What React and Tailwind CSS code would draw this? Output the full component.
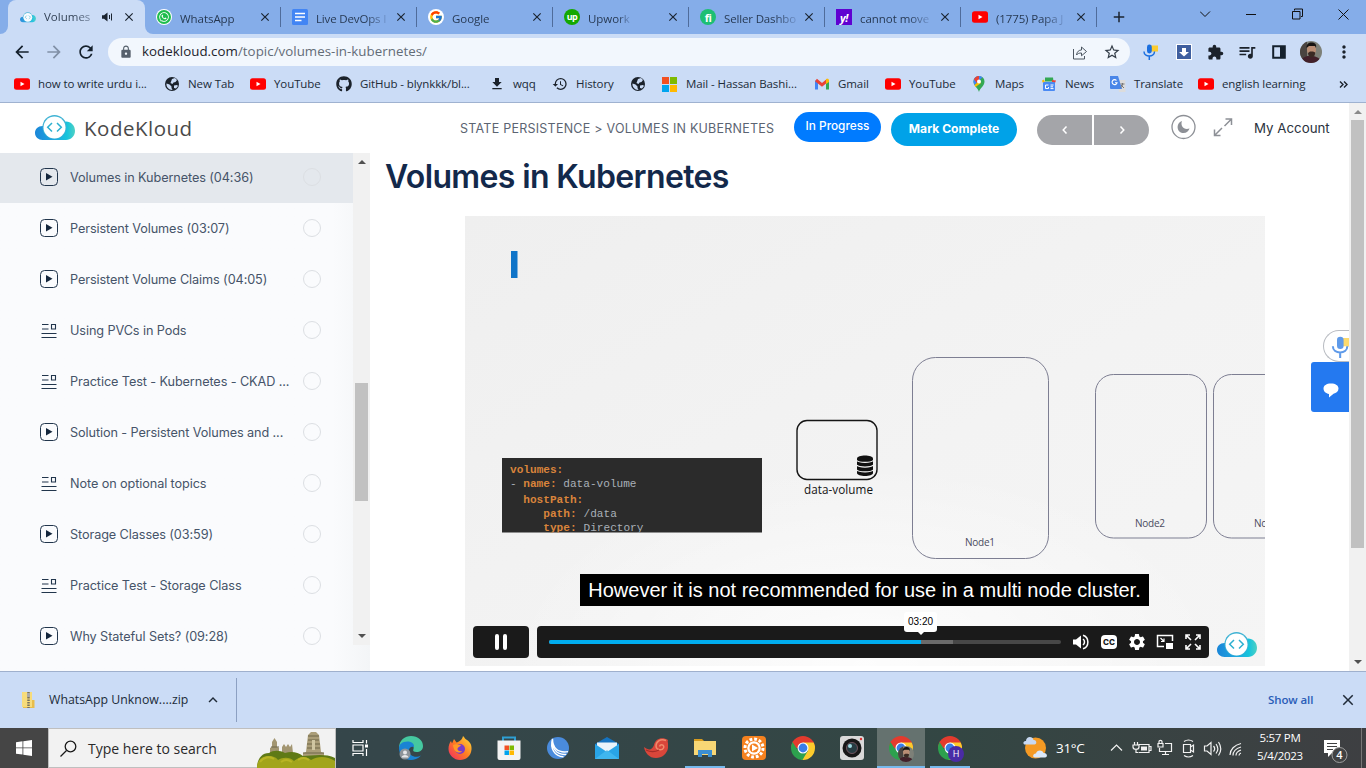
import React from "react";
import { FcGoogle } from "react-icons/fc";
import { FaGithub, FaWhatsapp } from "react-icons/fa";
import {
  MdClose, MdAdd, MdArrowBack, MdArrowForward, MdRefresh, MdLock, MdStarBorder, MdExtension,
  MdQueueMusic, MdMoreVert, MdHistory, MdFileDownload, MdSettings, MdKeyboardArrowUp,
} from "react-icons/md";

const UI = "font-['Open_Sans','Noto_Sans',sans-serif]";

function Cloud({ className }) {
  return (
    <svg viewBox="0 0 40 26" className={className}>
      <defs>
        <linearGradient id="cloudBase" x1="0" y1="0" x2="1" y2="0">
          <stop offset="0" stopColor="#1b86d8" />
          <stop offset="0.5" stopColor="#1fa9e0" />
          <stop offset="0.8" stopColor="#16c4dc" />
          <stop offset="1" stopColor="#4fd0c4" />
        </linearGradient>
      </defs>
      <path d="M7.500 25C3.500 25 0 22 0 18s3-7 7.500-7L31 6.500c5 0 9 4 9 9.300S36 25 31 25Z" fill="url(#cloudBase)" />
      <circle cx="19.500" cy="12" r="12" fill="#3fb3d4" />
      <circle cx="19.500" cy="12.500" r="11" fill="#fff" />
      <path d="m17 8-4.300 4.300L17 16.500M22 8l4.300 4.300L22 16.500" fill="none" stroke="#2cb0d0" strokeWidth="1.500" />
    </svg>
  );
}

function YT() {
  return (
    <svg viewBox="0 0 16 16" className="size-4 shrink-0">
      <rect y="2.300" width="16" height="11.500" rx="2.500" fill="#f00" />
      <path d="m6.500 5.700 4 2.300-4 2.300Z" fill="#fff" />
    </svg>
  );
}

function Docs() {
  return (
    <svg viewBox="0 0 16 16" className="size-4 shrink-0">
      <rect width="16" height="16" rx="1.500" fill="#4285f4" />
      <path d="M3 4.500h10M3 8h10M3 11.500h6.500" stroke="#fff" strokeWidth="1.500" />
    </svg>
  );
}

function Badge({ className, children }) {
  return <span className={"flex size-4 shrink-0 items-center justify-center font-bold text-white leading-none " + className}>{children}</span>;
}

function WhatsIcon() {
  return (
    <span className="flex size-4 shrink-0 items-center justify-center rounded-full bg-white">
      <FaWhatsapp className="size-[14px] rounded-full bg-[#1fbd4d] p-[1.500px] text-white" />
    </span>
  );
}

const tabs = [
  ["WhatsApp", <WhatsIcon />, "tracking-[-0.050px]"],
  ["Live DevOps I", <Docs />, "tracking-[-0.150px]"],
  ["Google", <span className="flex size-4 items-center justify-center rounded-full bg-white"><FcGoogle className="size-[14px]" /></span>, "tracking-[-0.050px]"],
  ["Upwork", <Badge className="rounded-full bg-[#14a800] text-[9px] tracking-tighter pb-px">up</Badge>, "tracking-[-0.050px]"],
  ["Seller Dashbo", <Badge className="rounded-full bg-[#1dbf73] text-[11px] tracking-tighter">fi</Badge>, "tracking-[-0.150px]"],
  ["cannot move", <Badge className="bg-[#5f01d1] text-[11px] tracking-tighter italic">y!</Badge>, "tracking-[-0.050px]"],
  ["(1775) Papa J", <YT />, "tracking-[-0.120px]"],
];

function TabStrip() {
  return (
    <div className="flex h-[34px] bg-[#85ade9]">
      <div className="w-2 shrink-0 bg-[#cbdcf6]"><div className="h-full rounded-br-lg bg-[#85ade9]" /></div>
      <div className="flex w-[137px] shrink-0 items-center rounded-t-lg bg-[#cbdcf6] pl-3">
        <Cloud className="h-[11px] w-4 opacity-90" />
        <span className="ml-2 w-[49px] whitespace-nowrap bg-gradient-to-r from-[#2d3c50] from-60% to-[#8798b2] bg-clip-text text-[11.500px] text-transparent">Volumes</span>
        <svg viewBox="0 0 11 10" className="ml-[9px] h-[10px] w-[11px]" fill="none" stroke="#1b2430"><path d="M0 3.300h2L5.500.5v9L2 6.700H0Z" fill="#1b2430" stroke="none" /><path d="M7.500 3v4M9.500 1.500v7" /></svg>
        <MdClose className="ml-[9px] size-[14px] text-[#1b2430]" />
      </div>
      <div className="w-2 shrink-0 bg-[#cbdcf6]"><div className="h-full rounded-bl-lg bg-[#85ade9]" /></div>
      {tabs.map(([label, icon, tr], i) => (
        <div key={label} className={(i === 0 ? "w-[128px] pl-[3px]" : "w-[136px] pl-[11px]") + " relative flex shrink-0 items-center"}>
          {icon}
          <span className="ml-2 w-[78px] shrink-0"><span className={"whitespace-nowrap bg-gradient-to-r from-[#24364f] bg-clip-text text-[11.500px] text-transparent " + (i % 2 || i > 3 ? "from-70% to-[#6f93cc] " : "to-[#24364f] ") + tr}>{label}</span></span>
          <MdClose className="size-[14px] shrink-0 text-[#1b2430]" />
          <span className="absolute top-[7px] right-0 h-5 w-px bg-[#4f6c9b]" />
        </div>
      ))}
      <MdAdd className="mt-[8px] ml-[13px] size-[18px] text-[#1b2430]" />
      <svg viewBox="0 0 160 34" className="ml-[72px] h-[34px] w-[160px] shrink-0" fill="none" stroke="#111" strokeWidth="1">
        <path d="m0 11.500 5 5 5-5M46 14.500h10M94.500 10.500v-1.500h8v7.500h-1.500M92.500 11.500h7.500v7.500h-7.500ZM138.500 9.500l10 10m0-10-10 10" />
      </svg>
    </div>
  );
}

function Avatar({ className }) {
  return (
    <svg viewBox="0 0 22 22" className={className}>
      <clipPath id="av"><circle cx="11" cy="11" r="11" /></clipPath>
      <g clipPath="url(#av)">
        <rect width="22" height="22" fill="#7d8078" />
        <rect width="7" height="22" fill="#4a4440" />
        <path d="M0 22c1-5 5-7 9-7s11 0 13 7Z" fill="#42202a" />
        <path d="M7 8c0-3 2-4 4.500-4S16 5 16 8c0 4-2 8-4.500 8S7 12 7 8Z" fill="#b98d74" />
        <path d="M6.500 7c0-4 2-5.500 5-5.500S17 3 16 7L15 5H9Z" fill="#171412" />
        <path d="M8 12 10 10.500h3l2.200 1c0 3-1.700 5-3.700 5s-3.500-2-3.500-4.500Z" fill="#3a2a24" />
      </g>
    </svg>
  );
}

function Mic({ className }) {
  return (
    <svg viewBox="0 0 16 16" className={className} fill="none">
      <path d="M8 1.500h7v6h-2.500L11 9V7.500H8Z" fill="#fbcb2f" />
      <rect x="4" y=".5" width="4.800" height="9" rx="2.400" fill="#1a6fe0" />
      <path d="M1 7.500c0 6 10.500 6 10.500 0M6.300 12v4" stroke="#1a6fe0" strokeWidth="1.500" />
    </svg>
  );
}

function Toolbar() {
  return (
    <div className="flex h-[36px] items-center bg-[#cbdcf6] pl-[12px]">
      <MdArrowBack className="size-[20px] text-[#14202c]" />
      <MdArrowForward className="ml-[12px] size-[20px] text-[#8190a6]" />
      <MdRefresh className="ml-[12px] size-[20px] text-[#14202c]" />
      <div className="ml-[12px] flex h-7 w-[1022px] items-center rounded-full bg-[#f2f7fd]">
        <MdLock className="ml-[11px] size-[14px] text-[#56606c]" />
        <span className="ml-[9px] w-[930px] text-[13.300px] tracking-[0.040px] text-[#636c77]"><span className="text-[#1c232c]">kodekloud.com</span>/topic/volumes-in-kubernetes/</span>
        <svg viewBox="0 0 16 16" className="size-4" fill="none" stroke="#4c5661">
          <path d="M1.500 5v10h11v-3M4.500 11c.5-3.500 2.500-5 5-5V3l5 4.500-5 4.300V9c-2.500 0-3.800.5-5 2Z" />
        </svg>
        <MdStarBorder className="ml-[15px] size-[18px] text-[#333d48]" />
      </div>
      <Mic className="ml-[13px] size-4" />
      <svg viewBox="0 0 16 16" className="ml-[17px] size-4">
        <rect width="16" height="16" fill="#fff" /><rect x="1" y="1" width="14" height="14" fill="#3f5f9f" />
        <path d="M6 4h4v4h3l-5 4.500L3 8h3Z" fill="#fff" />
      </svg>
      <MdExtension className="ml-[15px] size-[17px] text-[#1b222b]" />
      <MdQueueMusic className="ml-[13px] size-[20px] text-[#1b222b]" />
      <svg viewBox="0 0 14 14" className="ml-[15px] size-[14px]"><path d="M1.200 1.200h11.600v11.600H1.200Z" fill="none" stroke="#14202c" strokeWidth="2" /><path d="M8 1h5v12H8Z" fill="#14202c" /></svg>
      <Avatar className="ml-[14px] size-[22px]" />
      <MdMoreVert className="ml-[12px] size-[20px] text-[#1b222b]" />
    </div>
  );
}

const Globe = () => (
  <svg viewBox="0 0 16 16" className="size-4">
    <circle cx="8" cy="8" r="7" fill="#1b222b" />
    <path d="M2.500 7.500 5.500 8.500l2 2v1.500l1 2C5 14.200 2 11 2.500 7.500ZM8 3l3-1 2 2-1.500 2-2 .5-1 1.500-2-1ZM10 9.500l3-.5 1 1-2 2.500-2-.5Z" fill="#cbdcf6" />
  </svg>
);
const MS = ({ className }) => (
  <svg viewBox="0 0 15 15" className={className}><path d="M0 0h7v7H0Z" fill="#f25022" /><path d="M8 0h7v7H8Z" fill="#7fba00" /><path d="M0 8h7v7H0Z" fill="#00a4ef" /><path d="M8 8h7v7H8Z" fill="#ffb900" /></svg>
);
const Gmail = () => (
  <svg viewBox="0 0 16 16" className="size-4" fill="none"><path d="M2.500 13.500v-9" stroke="#4285f4" strokeWidth="3" /><path d="M13.500 13.500v-9" stroke="#34a853" strokeWidth="3" /><path d="M2 4 8 8.800 14 4" stroke="#ea4335" strokeWidth="3" /><path d="M12 3.200c1.500-1 3-.3 3 1.200V6l-3 2Z" fill="#fbbc04" /></svg>
);
const Pin = () => (
  <svg viewBox="0 0 16 16" className="size-4"><path d="M8 16C7 12 2.500 10 2.500 5.500A5.500 5.500 0 0 1 13.500 5.500C13.500 10 9 12 8 16Z" fill="#34a853" /><path d="M3.500 9 11.500 1.300A5.500 5.500 0 0 0 2.500 5.500c0 1.300.4 2.500 1 3.500Z" fill="#4285f4" /><path d="M3 3.500A5.500 5.500 0 0 1 8 0v5.500L6 7Z" fill="#ea4335" /><path d="M3.500 9 8 5l2 2-5.500 4Z" fill="#fbbc04" /><circle cx="8" cy="5.500" r="2" fill="#fff" /></svg>
);
const News = () => (
  <svg viewBox="0 0 16 16" className="size-4"><path d="M4 1.500h8l.5 4H4Z" fill="#34a853" /><path d="M1 4.500 3 3.500l1 3H1.500Z" fill="#fbbc04" /><path d="m11 4 4 .5-1 2.500h-3Z" fill="#ea4335" /><rect x="2" y="6" width="12" height="9" rx="1" fill="#4a8af4" /><path d="M7.500 9H4.500v3.500h3V11M12.500 9h-3m2.500 1.800H9.500m3 1.800h-3" stroke="#fff" fill="none" /></svg>
);
const Translate = () => (
  <svg viewBox="0 0 16 16" className="size-4"><path d="M7 4h8.500v12H9Z" fill="#dcdcdc" /><path d="M0 0h8l4 13H1a1 1 0 0 1-1-1Z" fill="#4a86e8" /><path d="M6.500 4.500A2.500 2.500 0 1 0 7 6.800H5" fill="none" stroke="#fff" strokeWidth="1.100" /><path d="M10.500 8h4m-2-1v1c0 2-1 3-2 4m.5-3 3 3" stroke="#777" fill="none" /></svg>
);

const marks = [
  ["w-[150px]", "how to write urdu i...", <YT />],
  ["w-[86px]", "New Tab", <Globe />],
  ["w-[86px]", "YouTube", <YT />],
  ["w-[153px]", "GitHub - blynkkk/bl...", <FaGithub className="size-4 text-[#1b222b]" />],
  ["w-[63px]", "wqq", <MdFileDownload className="size-4 text-[#1b222b]" />],
  ["w-[78px]", "History", <MdHistory className="size-4 text-[#1b222b]" />],
  ["w-[32px]", "", <Globe />],
  ["w-[152px]", "Mail - Hassan Bashi...", <MS className="size-[15px] mr-px" />],
  ["w-[71px]", "Gmail", <Gmail />],
  ["w-[86px]", "YouTube", <YT />],
  ["w-[70px]", "Maps", <Pin />],
  ["w-[69px]", "News", <News />],
  ["w-[88px]", "Translate", <Translate />],
  ["w-[140px]", "english learning", <YT />],
];

function Bookmarks() {
  return (
    <div className="flex h-[33px] items-center border-b border-[#9fb2d0] bg-[#cbdcf6] pb-[5px] pl-[14px] pt-[1px] text-[11.500px] tracking-[-0.090px] text-[#202b38]">
      {marks.map(([w, t, icon], i) => (
        <div key={i} className={"flex shrink-0 items-center gap-2 whitespace-nowrap " + w}>{icon}<span>{t}</span></div>
      ))}
      <svg viewBox="0 0 9 7" className="ml-px h-[7px] w-[9px]" fill="none" stroke="#1b222b" strokeWidth="1.400"><path d="m1 .5 3 3-3 3M5 .5l3 3-3 3" /></svg>
    </div>
  );
}

function SiteHeader() {
  return (
    <header className="flex h-[50px] shrink-0 bg-white font-['Inter',sans-serif]">
      <Cloud className="mt-[12px] ml-[35px] h-[26px] w-10" />
      <div className="mt-[11px] ml-[9px] w-[376px] font-['Open_Sans',sans-serif] text-[20.500px] leading-[28px] tracking-[0.500px] text-[#4a4a4a]">KodeKloud</div>
      <div className="mt-[16px] w-[334px] text-[12.500px] leading-[20px] tracking-[0.245px] whitespace-nowrap text-[#5b6472]">STATE PERSISTENCE &gt; VOLUMES IN KUBERNETES</div>
      <div className="mt-[9px] flex h-[30px] w-[87px] items-center justify-center rounded-full bg-[#007bff] text-[11.800px] font-medium whitespace-nowrap text-white">In Progress</div>
      <div className="mt-[10px] ml-[10px] flex h-[33px] w-[126px] items-center justify-center rounded-full bg-[#00a2e8] text-[12.100px] font-bold whitespace-nowrap text-white">Mark Complete</div>
      <div className="mt-[12px] ml-5 flex gap-[2px]">
        <div className="flex h-[30px] w-[55px] items-center justify-center rounded-l-full bg-[#a4a5a9]"><svg viewBox="0 0 6 8" className="h-2 w-[6px]"><path d="M4.500.5 1.200 4l3.300 3.500" fill="none" stroke="#fff" strokeWidth="1.500" /></svg></div>
        <div className="flex h-[30px] w-[55px] items-center justify-center rounded-r-full bg-[#a4a5a9]"><svg viewBox="0 0 6 8" className="h-2 w-[6px]"><path d="M1.500.5 4.800 4 1.500 7.500" fill="none" stroke="#fff" strokeWidth="1.500" /></svg></div>
      </div>
      <svg viewBox="0 0 26 26" className="mt-[11px] ml-[22px] size-[26px]"><circle cx="12.500" cy="13" r="11.500" fill="none" stroke="#8d9096" strokeWidth="1.300" /><path d="M11 7c-6 1.500-6 12 1.500 12 3 0 5.200-1.800 6-4.500C13 16.500 9 12 11 7Z" fill="#8d9096" /></svg>
      <svg viewBox="0 0 20 20" className="mt-[14px] ml-[16px] size-5" fill="none" stroke="#8d9096" strokeWidth="1.500"><path d="M12.500 2h6v6M18.500 2l-7 7M7.500 18.500h-6v-6M1.500 18.500l7.500-7.500" /></svg>
      <div className="mt-[15px] ml-[21px] text-[13.300px] leading-[20px] whitespace-nowrap text-[#2b333e]">My Account</div>
    </header>
  );
}

const lessons = [
  ["Volumes in Kubernetes (04:36)", 1], ["Persistent Volumes (03:07)", 1], ["Persistent Volume Claims (04:05)", 1],
  ["Using PVCs in Pods", 0], ["Practice Test - Kubernetes - CKAD ...", 0], ["Solution - Persistent Volumes and ...", 1],
  ["Note on optional topics", 0], ["Storage Classes (03:59)", 1], ["Practice Test - Storage Class", 0], ["Why Stateful Sets? (09:28)", 1],
];

function Sidebar() {
  return (
    <aside className="w-[370px] shrink-0 bg-gradient-to-r from-[#fafbfd] from-90% to-[#f3f5f7] font-['Inter',sans-serif]">
      <div className="flex h-[492px]">
        <div className="w-[353px] overflow-hidden">
          {lessons.map(([t, v], i) => (
            <div key={t} className={"mb-px flex h-[50px] items-center pl-[40px] " + (i === 0 ? "bg-[#e4e8ed]" : "")}>
              {v ? (
                <svg viewBox="0 0 18 18" className="mb-[2px] size-[18px] shrink-0"><rect x=".5" y=".5" width="17" height="17" rx="4" fill="none" stroke="#21354c" strokeWidth="1" /><path d="m6 5 6.500 3.700L6 12.500Z" fill="#14263c" /></svg>
              ) : (
                <svg viewBox="0 0 18 18" className="mb-px size-[18px] shrink-0" fill="none" stroke="#21354c" strokeWidth="1.100"><path d="M2 2.500h6.500M2 7h6.500M1.500 11.500h15M1.500 15.500h15M11.500 2.500h4v4.500h-4Z" /></svg>
              )}
              <span className="ml-3 w-[232px] text-[12.700px] tracking-[-0.100px] whitespace-nowrap text-[#465469]">{t}</span>
              <span className="mb-[3px] ml-px size-[18px] shrink-0 rounded-full border-[1.500px] border-[#dcdfe3]" />
            </div>
          ))}
        </div>
        <div className="flex w-[17px] flex-col items-center bg-[#f1f1f1]">
          <svg viewBox="0 0 8 4" className="mt-[7px] h-1 w-2"><path d="m0 4 4-4 4 4Z" fill="#505050" /></svg>
          <div className="mt-[219px] h-[118px] w-[13px] bg-[#c1c1c1]" />
          <svg viewBox="0 0 8 4" className="mt-[133px] h-1 w-2"><path d="m0 0 4 4 4-4Z" fill="#505050" /></svg>
        </div>
      </div>
    </aside>
  );
}

function Slide() {
  return (
    <svg viewBox="465 216 800 450" className="block h-[450px] w-[800px]">
      <defs>
        <linearGradient id="slideBg" x1="0" y1="0" x2="1" y2="1">
          <stop offset="0" stopColor="#efefef" /><stop offset=".55" stopColor="#f3f3f3" /><stop offset="1" stopColor="#f5f5f5" />
        </linearGradient>
        <radialGradient id="slideGlow" cx=".5" cy="1" r=".45">
          <stop offset="0" stopColor="#fff" stopOpacity=".8" /><stop offset="1" stopColor="#fff" stopOpacity="0" />
        </radialGradient>
        <clipPath id="codeClip"><rect x="502" y="458" width="260" height="74.500" /></clipPath>
      </defs>
      <rect x="465" y="216" width="800" height="450" fill="url(#slideBg)" />
      <rect x="465" y="216" width="800" height="450" fill="url(#slideGlow)" />
      <rect x="511" y="251" width="6.500" height="27" fill="#0f74c8" />
      <rect x="502" y="458" width="260" height="74.500" fill="#2b2b2b" />
      <g clipPath="url(#codeClip)" className="font-['Liberation_Mono',monospace]" fontSize="11.100" fill="#a9b0b8">
        <g fill="#d9843b" fontWeight="bold">
          <text x="510" y="472.500">volumes:</text>
          <text x="523.300" y="486.500">name:</text>
          <text x="523.300" y="503">hostPath:</text>
          <text x="543.300" y="516.500">path:</text>
          <text x="543.300" y="530.500">type:</text>
        </g>
        <text x="510" y="486.500">-</text>
        <text x="563.300" y="486.500">data-volume</text>
        <text x="583.500" y="516.500">/data</text>
        <text x="583.500" y="530.500">Directory</text>
      </g>
      <g fill="none" stroke="#7d7e92" strokeWidth="1">
        <rect x="912.500" y="357.500" width="136" height="201" rx="23" />
        <rect x="1095.500" y="374.500" width="111" height="163.500" rx="18" />
        <rect x="1213.500" y="374.500" width="111" height="163.500" rx="18" />
      </g>
      <rect x="797" y="420.500" width="80" height="59" rx="10" fill="none" stroke="#151515" strokeWidth="1.400" />
      <path d="M857 458.500c0-4 16-4 16 0v14.500c0 4-16 4-16 0Z" fill="#111" />
      <path d="M857 460.500c2 2.500 14 2.500 16 0M857 465.200c2 2.500 14 2.500 16 0M857 470c2 2.500 14 2.500 16 0" fill="none" stroke="#f3f3f3" strokeWidth="1.200" />
      <g className="font-['Open_Sans',sans-serif]">
        <text x="804" y="494" fontSize="11.700" fill="#151515" textLength="69">data-volume</text>
        <g fontSize="10" fill="#4b4b60">
          <text x="965" y="546" textLength="30">Node1</text>
          <text x="1135" y="526.500" textLength="30">Node2</text>
          <text x="1254" y="526.500" textLength="30">Node3</text>
        </g>
      </g>
    </svg>
  );
}

function Player() {
  return (
    <div className="relative mt-[13px] ml-[95px] h-[450px] w-[800px]">
      <Slide />
      <div className="absolute inset-x-2 bottom-2 flex flex-col">
        <div className="mb-5 ml-[107px] h-8 w-[569px] bg-black text-center font-['Liberation_Sans',Arial,sans-serif] text-[20px] leading-[32px] whitespace-nowrap text-white">However it is not recommended for use in a multi node cluster.</div>
        <div className="flex h-8 items-end gap-2">
          <div className="flex h-8 w-14 items-center justify-center gap-1 rounded bg-[#1a1a1a]">
            <span className="h-4 w-1 rounded-full bg-white" /><span className="h-4 w-1 rounded-full bg-white" />
          </div>
          <div className="flex h-8 w-[672px] items-center rounded bg-[#1a1a1a] pl-3 text-white">
            <div className="relative h-1 w-[512px] shrink-0 rounded-full bg-[#474747]">
              <div className="h-1 w-[404px] rounded-l-full bg-[#6b6b6b]"><div className="h-1 w-[372px] rounded-l-full bg-[#00adef]" /></div>
              <div className="absolute bottom-[12px] left-[355px] h-5 w-[33px] rounded-[3px] bg-white text-center font-['Liberation_Sans',Arial,sans-serif] text-[10px] leading-5 text-black">03:20</div>
              <svg viewBox="0 0 6 3" className="absolute bottom-[9px] left-[369px] h-[3px] w-[6px]"><path d="M0 0h6L3 3Z" fill="#fff" /></svg>
            </div>
            <svg viewBox="0 0 18 18" className="ml-[11px] size-[18px]" fill="none" stroke="#fff" strokeWidth="1.500"><path d="M1 6.500h3L9 2.500v13l-5-4H1Z" fill="#fff" stroke="none" /><path d="M11 6c2 1.500 2 4.500 0 6M11 2.200c6.500 2 6.500 11.600 0 13.600" /></svg>
            <div className="ml-[11px] flex h-[14px] w-4 items-center justify-center rounded-sm bg-white font-['Inter'] text-[8px] leading-none font-extrabold text-[#1a1a1a]">CC</div>
            <MdSettings className="ml-[10px] size-[20px]" />
            <svg viewBox="0 0 18 18" className="ml-[9px] size-[18px]" fill="none" stroke="#fff" strokeWidth="1.500"><path d="M8 13.500H1.500v-11h15V8" /><path d="M10 10h7v6h-7Z" fill="#fff" stroke="none" /><path d="m4.500 5 3 3M8 5.500v3H5" strokeWidth="1.200" /></svg>
            <svg viewBox="0 0 18 18" className="ml-[10px] size-[18px]" fill="none" stroke="#fff" strokeWidth="1.600"><path d="M2 6V2h4M2 2l5 5M12 2h4v4M16 2l-5 5M2 12v4h4M2 16l5-5M16 12v4h-4M16 16l-5-5" /></svg>
          </div>
          <Cloud className="h-[26px] w-10" />
        </div>
      </div>
    </div>
  );
}

function Page() {
  return (
    <div className="relative flex h-[568px] bg-white">
      <div className="flex w-[1349px] flex-col overflow-hidden">
        <SiteHeader />
        <div className="flex h-[518px]">
          <Sidebar />
          <main className="w-[979px]">
            <h1 className="mt-1 ml-[15px] h-[46px] font-['Inter',sans-serif] text-[32px] leading-[40px] font-semibold tracking-[-0.640px] text-[#13294b]">Volumes in Kubernetes</h1>
            <Player />
          </main>
        </div>
      </div>
      <div className="flex w-[17px] flex-col items-center bg-[#f1f1f1]">
        <svg viewBox="0 0 8 4" className="mt-[7px] h-1 w-2"><path d="m0 4 4-4 4 4Z" fill="#8a8a8a" /></svg>
        <div className="mt-[6px] h-[428px] w-[13px] bg-[#c1c1c1]" />
        <svg viewBox="0 0 8 4" className="mt-[112px] h-1 w-2"><path d="m0 0 4 4 4-4Z" fill="#505050" /></svg>
      </div>
      <div className="absolute top-[227px] right-[17px] flex h-8 w-[26px] items-center overflow-hidden rounded-l-full border border-r-0 border-[#b9bcc2] bg-white pl-[7px]">
        <Mic className="mt-[2px] h-[22px] w-[23px] shrink-0 opacity-70" />
      </div>
      <div className="absolute top-[259px] right-[17px] flex h-[50px] w-[38px] items-center justify-center rounded-l-[3px] bg-[#2479f0]">
        <svg viewBox="0 0 18 16" className="mt-[5px] ml-[2px] h-4 w-[18px]"><path d="M9 1.500c4.500 0 7.500 2 7.500 5 0 2.800-2.300 4.700-5 5.200L7 15.500V12C4 11.500 1.500 9.500 1.500 6.500c0-3 3-5 7.500-5Z" fill="#fff" /></svg>
      </div>
    </div>
  );
}

function Downloads() {
  return (
    <div className="flex h-[57px] items-center border-t border-[#9fb0cd] bg-[#cbdcf6] text-[#202b38]">
      <svg viewBox="0 0 14 18" className="ml-[21px] h-[18px] w-[14px]"><path d="M1 1h10v15H1Z" fill="#f7dc7b" /><path d="M11 9h2.500v8H2v-1h9Z" fill="#e8bd4b" /><path d="M7.500 1v16" stroke="#77715f" strokeWidth="2.500" strokeDasharray="1.500 1" /><path d="M6 2h3v4H6Z" fill="#aaa" /></svg>
      <span className="ml-[14px] w-[139px] text-[12.300px] tracking-[0.030px] whitespace-nowrap">WhatsApp Unknow....zip</span>
      <MdKeyboardArrowUp className="ml-[16px] size-[18px]" />
      <div className="ml-[14px] h-[44px] w-px bg-[#8ca0c2]" />
      <span className="ml-[1031px] w-[54px] text-[11.500px] font-semibold tracking-[-0.100px] whitespace-nowrap text-[#2a5cb8]">Show all</span>
      <MdClose className="ml-[17px] size-[18px]" />
    </div>
  );
}

function Chrome({ id }) {
  return (
    <svg viewBox="0 0 24 24" className="size-6">
      <clipPath id={id}><circle cx="12" cy="12" r="12" /></clipPath>
      <g clipPath={"url(#" + id + ")"}>
        <path d="M0 0h24v12H0Z" fill="#e33b2e" />
        <path d="M12 6.500h12V24H10l7-9.200Z" fill="#fccb2c" />
        <path d="M1.500 6 7.200 14.800l4.800 2.700 4.800-2.700L11.500 24H0V6Z" fill="#2da14e" />
      </g>
      <circle cx="12" cy="12" r="5.500" fill="#fff" /><circle cx="12" cy="12" r="4.400" fill="#3a7de8" />
    </svg>
  );
}

function TaskItem({ active, line, children }) {
  return (
    <div className={"relative flex h-10 w-12 shrink-0 items-center justify-center " + (active ? "bg-[#65726f]" : "")}>
      {children}
      {line && <span className={"absolute bottom-0 h-[2px] bg-[#76b9ed] " + (active ? "w-12" : "w-10")} />}
    </div>
  );
}

function Temples() {
  return (
    <svg viewBox="0 0 78 40" className="h-10 w-[78px] shrink-0">
      <path d="M13 26v-6l2-1v-5l2.500-4 2.500 4v5l2 1v6ZM25 25v-6l2-3 2 3 2-3 2 3 2-3 1 9Z" fill="#a39672" />
      <path d="M46 31v-6l3-1 2-17 3-3h5l3 3 2 17 3 1v6Z" fill="#aa9d78" />
      <path d="M51 8h11M51 12h11M50 16h13M50 20h13M46 25h21M14 19h8" stroke="#6f6648" strokeWidth="1" />
      <path d="M55 12h3v10h-3Z" fill="#d0c6a2" />
      <path d="M0 40c0-8 4-15 12-15 4-3 11-3 16 0 6-2 13-1 18 3 8 0 22-3 32 2v10Z" fill="#5f7a16" />
      <path d="M0 40c0-8 5-12 12-12 4 0 8 2 9 4 5-3 12-3 16 1 6-5 12-5 17-1 7-4 16-4 24 1v7Z" fill="#a2a51b" />
      <path d="M3 34c3-5 10-6 14-3M24 34c4-3 8-2 11 0M41 32c4-3 8-2 11 0" fill="none" stroke="#b9b525" strokeWidth="2" />
    </svg>
  );
}

function Taskbar() {
  return (
    <div className="flex h-10 bg-gradient-to-r from-[#35464a] from-30% via-[#334643] via-70% to-[#3e3f42] text-white">
      <div className="flex w-12 shrink-0 items-center justify-center bg-[#454545]">
        <svg viewBox="0 0 16 16" className="size-4"><path d="M0 2.200 6.500 1.300v6.200H0ZM7.300 1.200 16 0v7.500H7.300ZM0 8.300h6.500v6.200L0 13.700ZM7.300 8.300H16V16l-8.700-1.300Z" fill="#fff" /></svg>
      </div>
      <div className="flex w-72 shrink-0 items-center border border-[#bfbfbf] bg-[#f2f2f2] text-[#2a2a2a]">
        <svg viewBox="0 0 17 17" className="ml-[11px] size-[17px]" fill="none" stroke="#1a1a1a" strokeWidth="1.300"><circle cx="10.500" cy="6.500" r="5.300" /><path d="m6.500 10.500-6 6" /></svg>
        <span className="ml-[11px] w-[169px] text-[14px] whitespace-nowrap">Type here to search</span>
        <Temples />
      </div>
      <div className="flex w-[638px] shrink-0 gap-px">
        <TaskItem><svg viewBox="0 0 18 18" className="size-[18px]" fill="none" stroke="#fff" strokeWidth="1.200"><path d="M2 1v2.500h10V1M2 17v-2.500h10V17M2 6h10v6H2ZM15.500 1v3.500M15.500 10v7" /><path d="M14 5.500h3v3h-3Z" fill="#fff" stroke="none" /></svg></TaskItem>
        <div className="w-px shrink-0" />
        <TaskItem>
          <svg viewBox="0 0 24 24" className="size-6"><path d="M0 12C0 4 6 0 12 0c7 0 12 4.500 12 10 0 4-3 6-6.500 6-3 0-4-1-3-3 1-3-2-5-5-5C5 8 2 9 0 12Z" fill="#45c8a0" /><path d="M0 12c0-4 4-7 9.500-6.500 4 .3 6 3 5.500 5.500-5-2-7 5-3 8 3 2.500 7 2 10 .5C19 23 15 24 12 24 5 24 0 19 0 12Z" fill="#1a83d4" /><circle cx="6" cy="18" r="5.500" fill="#8d9499" /><circle cx="6" cy="16.500" r="2" fill="#e5e7e8" /><path d="M2.500 21.500c0-3.500 7-3.500 7 0Z" fill="#e5e7e8" /></svg>
        </TaskItem>
        <TaskItem>
          <svg viewBox="0 0 24 24" className="size-6"><defs><linearGradient id="ff" x1="1" y1="0" x2="0" y2="1"><stop offset="0" stopColor="#ffe23c" /><stop offset=".5" stopColor="#ff7d22" /><stop offset="1" stopColor="#f0246a" /></linearGradient></defs><path d="M15 0c2 2 2 3 4 4 3 2 5 5 4.500 9.500C23 20 18 24 12 24S.5 19 .5 13c0-3.500 1-6 2.500-8l1 2.500L6 3l2.500 3.500C11 6 14 4 15 0Z" fill="url(#ff)" /><circle cx="12" cy="13" r="5" fill="#7b3cc8" /><path d="M5 9c3-1.500 5 0 8 0-.5 2-3 1.500-3.500 3.500S12 16 14 15c-1 2.500-8 3-9-6Z" fill="#ff9a26" /></svg>
        </TaskItem>
        <TaskItem>
          <svg viewBox="0 0 24 24" className="size-6"><path d="M6 5V1.500h12V5" fill="none" stroke="#2e9fd4" strokeWidth="2" /><path d="M.5 4.500h23V22a2 2 0 0 1-2 2h-19a2 2 0 0 1-2-2Z" fill="#f3f3f3" /><path d="M7.500 9.500H12V14H7.500Z" fill="#f25022" /><path d="M12.500 9.500H17V14h-4.500Z" fill="#7fba00" /><path d="M7.500 14.500H12V19H7.500Z" fill="#00a4ef" /><path d="M12.500 14.500H17V19h-4.500Z" fill="#ffb900" /></svg>
        </TaskItem>
        <TaskItem>
          <svg viewBox="0 0 24 24" className="size-[22px]" fill="none" stroke="#fff"><circle cx="12" cy="12" r="12" fill="#4a8bdc" stroke="none" /><path d="M6 2c0 9 5 16 17 14M6 2c-1 10 4 18 15 17M6 2c-3 10 2 19 12 19.500" strokeWidth="1.500" /></svg>
        </TaskItem>
        <TaskItem>
          <svg viewBox="0 0 24 24" className="size-6"><path d="M0 8 12 1l12 7v3H0Z" fill="#1573c0" /><path d="M2 6.500h20v9H2Z" fill="#e9f3fa" /><path d="M0 8l12 8L24 8v15H0Z" fill="#29a4e6" /><path d="m0 23 12-9 12 9Z" fill="#49bdf2" opacity=".7" /></svg>
        </TaskItem>
        <TaskItem>
          <svg viewBox="0 0 24 24" className="size-6" fill="none"><path d="M0 11c5 4 8 3 10-2 1-6 8-9 14-5-1 2 1 4 0 8-1 6-6 10-12 10C5 22 1 17 0 11Z" fill="#d9463a" /><path d="M22 4.500C16 2 12 6 12 10s6 5 7.500 2-3-4.500-4-1.500" stroke="#f08a6c" strokeWidth="1.500" /><path d="M2 14c6 3 11 1 13 0" stroke="#a62c28" strokeWidth="1.200" /></svg>
        </TaskItem>
        <TaskItem line>
          <svg viewBox="0 0 22 20" className="h-5 w-[22px]"><path d="M0 1h8l2 2H0Z" fill="#d79b1e" /><path d="M0 3h22v14H0Z" fill="#f8d775" /><path d="M4 19v-7h14v7h-4v-3H8v3Z" fill="#3c8fd0" /></svg>
        </TaskItem>
        <TaskItem>
          <svg viewBox="0 0 24 24" className="size-6"><rect width="24" height="24" rx="4" fill="#f5821f" /><circle cx="12" cy="12" r="9" fill="none" stroke="#fff" strokeWidth="3" strokeDasharray="2.800 1.900" /><circle cx="12" cy="12" r="6.800" fill="#fff" /><circle cx="12" cy="12" r="4.500" fill="#f5821f" /><path d="m10 8.500 6 3.500-6 3.500Z" fill="#fff" /></svg>
        </TaskItem>
        <TaskItem><Chrome id="c1" /></TaskItem>
        <TaskItem>
          <svg viewBox="0 0 24 24" className="size-6"><rect width="24" height="24" rx="3" fill="#d9d9d9" /><circle cx="12" cy="12" r="9.500" fill="#171717" /><circle cx="12" cy="12" r="5.500" fill="#273c42" stroke="#71545e" strokeWidth="1" /><circle cx="10" cy="10" r="2" fill="#9fdbe2" /><circle cx="21" cy="3" r="1.200" fill="#d33" /></svg>
        </TaskItem>
        <TaskItem active line>
          <Chrome id="c2" /><Avatar className="absolute top-[18px] left-[21px] size-4" />
        </TaskItem>
        <TaskItem line>
          <Chrome id="c3" /><span className="absolute top-[18px] left-[22px] flex size-4 items-center justify-center rounded-full bg-[#4a2ba6] text-[9px]">H</span>
        </TaskItem>
      </div>
      <svg viewBox="0 0 26 24" className="mt-2 ml-[49px] h-6 w-[26px] shrink-0"><circle cx="12.500" cy="12" r="10.500" fill="#f59a23" /><path d="M2 8.500C-.5 8.500 0 4.500 3 5 3 0 10 0 10.500 4c3-.5 4 4 1 4.500Z" fill="#c8d9f2" /><path d="M12 21.500c-3 0-2-4.500 1-4 .5-4 7-4 7.500-.5 4-.5 4.500 4.500 1.500 4.500Z" fill="#dbe8f8" /></svg>
      <span className="mt-[10px] ml-[7px] w-[54px] shrink-0 text-[13.500px] leading-5 tracking-[-0.300px] whitespace-nowrap">31°C</span>
      <svg viewBox="0 0 136 24" className="mt-2 h-6 w-[136px] shrink-0" fill="none" stroke="#f2f2f2" strokeWidth="1.200">
        <path d="m1 14.500 5.500-5.500 5.500 5.500" />
        <path d="M28.500 8.500h10.500v8H28.500M39 10.500h2v4h-2M24.500 6v3m3-3v3M23 9h6v2c0 3-6 3-6 0ZM26 13.500v3h2" /><path d="M31 10.500h6v4h-6Z" fill="#f2f2f2" stroke="none" />
        <path d="M55 7.500h6.500v8H49.500V12M55.500 15.500v3M52 18.500h7M48 7.500h5v3.500h-5ZM49 7.500V5.500c0-1.500 3-1.500 3 0v2" />
        <path d="M73.500 8.500h7v8h-7ZM80.500 11l3-2v7l-3-2M74 5.500c3-2 6-2 9 0M74 19.500c3 2 6 2 9 0" />
        <path d="M94.500 10h2.500l4-3.500v12L97 15h-2.500ZM103.500 10c1.300 1.500 1.300 4 0 5.500M106 8c2.300 3 2.300 6.500 0 9.500M108.500 6c3 4.500 3 9 0 13.500" />
        <path d="M120 19c0-5.500 4.500-10 11-11.500M123 19.500c0-4 3-7 8-8.500M126 19.500c0-2.500 2-4.500 5-5.500M129 19.500c0-1 .5-2 2-2.500" />
      </svg>
      <div className="mt-[1px] ml-[3px] flex w-[62px] shrink-0 flex-col items-center text-[11.500px] leading-[18px] tracking-[-0.250px] whitespace-nowrap">
        <span>5:57 PM</span><span>5/4/2023</span>
      </div>
      <svg viewBox="0 0 26 26" className="mt-[9px] ml-[12px] size-[26px] shrink-0"><path d="M1 3h16v13H9l-4 4v-4H1Z" fill="#fff" /><path d="M4 6.500h10M4 9.500h10M4 12.500h6" stroke="#404142" strokeWidth="1.200" /><circle cx="16.500" cy="18" r="7.500" fill="#414243" stroke="#a0a0a0" /><text x="16.500" y="22" fontSize="11" fontWeight="600" textAnchor="middle" fill="#fff">4</text></svg>
      <div className="ml-[12px] w-px bg-[#777]" />
    </div>
  );
}

export default function App() {
  return (
    <div className={"h-[768px] w-[1366px] overflow-hidden bg-white " + UI}>
      <TabStrip />
      <Toolbar />
      <Bookmarks />
      <Page />
      <Downloads />
      <Taskbar />
    </div>
  );
}
